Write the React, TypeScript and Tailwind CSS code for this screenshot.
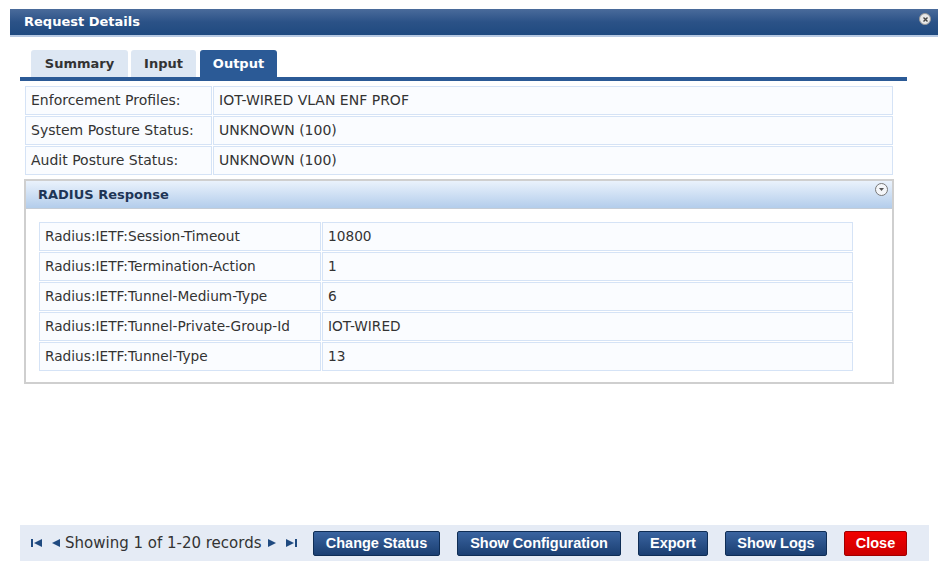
import React from "react";

const profileRows = [
  ["Enforcement Profiles:", "IOT-WIRED VLAN ENF PROF"],
  ["System Posture Status:", "UNKNOWN (100)"],
  ["Audit Posture Status:", "UNKNOWN (100)"],
];

const radiusRows = [
  ["Radius:IETF:Session-Timeout", "10800"],
  ["Radius:IETF:Termination-Action", "1"],
  ["Radius:IETF:Tunnel-Medium-Type", "6"],
  ["Radius:IETF:Tunnel-Private-Group-Id", "IOT-WIRED"],
  ["Radius:IETF:Tunnel-Type", "13"],
];

const verdana = { fontFamily: "Verdana, 'DejaVu Sans', sans-serif" };
const arial = { fontFamily: "'Liberation Sans', Arial, sans-serif" };

function BlueButton({ label, className = "" }: { label: string; className?: string }) {
  return (
    <button
      style={arial}
      className={`h-[25px] whitespace-nowrap rounded-[2px] border border-[#0f2d55] bg-gradient-to-b from-[#3a64a0] to-[#1b3f72] text-white text-[14.5px] font-bold leading-none ${className}`}
    >
      {label}
    </button>
  );
}

export default function App() {
  return (
    <div className="w-[949px] h-[572px] bg-white relative overflow-hidden text-[#333]" style={verdana}>
      <div className="pt-[9px] pl-[10px] w-[938px]">
        {/* title bar */}
        <div className="h-[28px] flex items-center justify-between pl-[14px] pr-[7px] bg-gradient-to-b from-[#4a6b9b] via-[#2b5287] to-[#1f4a80] border-b-2 border-[#b7c9e3]">
          <span className="text-white font-bold text-[13px]">Request Details</span>
          <span className="w-[12px] h-[12px] rounded-full bg-[#e8e8e8] border border-[#999] flex items-center justify-center -mt-[6px]">
            <svg width="7" height="7" viewBox="0 0 7 7">
              <path d="M1.5 1.5 L5.5 5.5 M5.5 1.5 L1.5 5.5" stroke="#444" strokeWidth="1.4" />
            </svg>
          </span>
        </div>
      </div>

      {/* tabs */}
      <div className="ml-[20px] w-[887px] mt-[13px] flex items-end gap-[3px] pl-[11px] border-b-4 border-[#2b5a96]">
        <div className="h-[27px] w-[97px] rounded-t-[3px] bg-[#dde7f3] flex items-center justify-center font-bold text-[13px]">Summary</div>
        <div className="h-[27px] w-[65px] rounded-t-[3px] bg-[#dde7f3] flex items-center justify-center font-bold text-[13px]">Input</div>
        <div className="h-[27px] w-[77px] ml-[1px] rounded-t-[3px] bg-[#2b5a96] text-white flex items-center justify-center font-bold text-[13px]">Output</div>
      </div>

      {/* profile table */}
      <div className="ml-[25px] w-[868px] mt-[5px] flex flex-col gap-[1px]">
        {profileRows.map(([k, v]) => (
          <div key={k} className="flex gap-[1px] h-[29px]">
            <div className="w-[187px] border border-[#d5e3f6] bg-[#fafcff] flex items-center pl-[5px] text-[14px] whitespace-nowrap">{k}</div>
            <div className="flex-1 border border-[#d5e3f6] bg-[#fafcff] flex items-center pl-[5px] text-[14px]">{v}</div>
          </div>
        ))}
      </div>

      {/* radius panel */}
      <div className="ml-[24px] w-[870px] mt-[4px] h-[205px] border-2 border-[#cfcfcf] bg-white">
        <div className="h-[28px] bg-gradient-to-b from-[#eaf2fc] to-[#b3cdeb] border-b border-[#c4ccd6] flex items-center justify-between pl-[12px] pr-[4px]">
          <span className="font-bold text-[13px] text-[#1e3556]">RADIUS Response</span>
          <span className="w-[13px] h-[13px] rounded-full border border-[#777] bg-[#f4f6f9] flex items-center justify-center -mt-[10px]">
            <svg width="7" height="5" viewBox="0 0 7 5">
              <path d="M1 1 L6 1 L3.5 4 Z" fill="#555" />
            </svg>
          </span>
        </div>
        <div className="pt-[13px] pl-[13px] flex flex-col gap-[1px] w-[827px]">
          {radiusRows.map(([k, v]) => (
            <div key={k} className="flex gap-[1px] h-[29px]">
              <div className="w-[282px] border border-[#d5e3f6] bg-[#fafcff] flex items-center pl-[5px] text-[13.7px] whitespace-nowrap">{k}</div>
              <div className="flex-1 border border-[#d5e3f6] bg-[#fafcff] flex items-center pl-[5px] text-[13.7px]">{v}</div>
            </div>
          ))}
        </div>
      </div>

      {/* footer */}
      <div className="absolute left-[20px] top-[525px] w-[909px] h-[36px] bg-[#e5ebf5] flex items-center pl-[11px]">
        <div className="flex items-center gap-[6px] text-[15px] whitespace-nowrap">
          <svg width="12" height="10" viewBox="0 0 12 10">
            <rect x="0" y="1" width="2" height="8" fill="#1f4a80" />
            <path d="M11 1 L11 9 L3 5 Z" fill="#1f4a80" />
          </svg>
          <svg width="9" height="10" viewBox="0 0 9 10" className="ml-[2px]">
            <path d="M9 1 L9 9 L1 5 Z" fill="#1f4a80" />
          </svg>
          <span className="-ml-[1px]">Showing 1 of 1-20 records</span>
          <svg width="9" height="10" viewBox="0 0 9 10">
            <path d="M0 1 L0 9 L8 5 Z" fill="#1f4a80" />
          </svg>
          <svg width="12" height="10" viewBox="0 0 12 10" className="ml-[2px]">
            <path d="M1 1 L1 9 L9 5 Z" fill="#1f4a80" />
            <rect x="10" y="1" width="2" height="8" fill="#1f4a80" />
          </svg>
        </div>
        <div className="flex items-center ml-auto mr-[22px] gap-[17px]">
          <BlueButton label="Change Status" className="w-[127px]" />
          <BlueButton label="Show Configuration" className="w-[164px]" />
          <BlueButton label="Export" className="w-[70px]" />
          <BlueButton label="Show Logs" className="w-[102px]" />
          <button
            style={arial}
            className="h-[25px] w-[63px] whitespace-nowrap rounded-[2px] border border-[#a00000] bg-gradient-to-b from-[#f20000] to-[#cc0000] text-white text-[14.5px] font-bold leading-none"
          >
            Close
          </button>
        </div>
      </div>
    </div>
  );
}
